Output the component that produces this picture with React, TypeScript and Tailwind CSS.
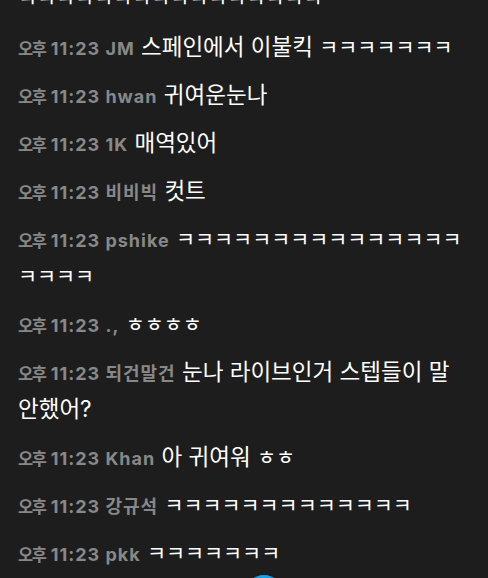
const messages = [
  { name: "yj", text: "ㅋㅋㅋㅋㅋㅋㅋㅋㅋㅋㅋㅋㅋ ㅋㅋㅋㅋㅋㅋㅋㅋㅋㅋㅋㅋㅋㅋㅋㅋㅋㅋㅋㅋ" },
  { name: "JM", text: "스페인에서 이불킥 ㅋㅋㅋㅋㅋㅋㅋ" },
  { name: "hwan", text: "귀여운눈나" },
  { name: "1K", text: "매역있어" },
  { name: "비비빅", text: "컷트" },
  { name: "pshike", text: "ㅋㅋㅋㅋㅋㅋㅋㅋㅋㅋㅋㅋㅋㅋㅋㅋㅋㅋㅋ" },
  { name: ".,", text: "ㅎㅎㅎㅎ" },
  { name: "되건말건", text: "눈나 라이브인거 스텝들이 말 안했어?" },
  { name: "Khan", text: "아 귀여워 ㅎㅎ" },
  { name: "강규석", text: "ㅋㅋㅋㅋㅋㅋㅋㅋㅋㅋㅋㅋㅋ" },
  { name: "pkk", text: "ㅋㅋㅋㅋㅋㅋㅋ" },
]

// jamo runs (ㅋㅋ, ㅎㅎ) render a bit narrower than full syllables
function Message({ text }: { text: string }) {
  const parts = text.split(/([ㄱ-ㅎ]+)/)
  return (
    <span className="text-white">
      {parts.map((p, i) =>
        /^[ㄱ-ㅎ]+$/.test(p) ? (
          <span key={i} className="text-[20.7px] leading-[20px]">{p}</span>
        ) : (
          p
        )
      )}
    </span>
  )
}

export default function App() {
  return (
    <div className="relative h-[578px] w-full overflow-hidden bg-[#1d1d1d] font-['Inter','Noto_Sans_CJK_KR',sans-serif]">
      <div className="mt-[-63px] px-[18px] text-[22.5px] leading-[37px]">
        {messages.map((m, i) => (
          <div key={i} className="h-auto py-[5.5px]">
            <span className="text-[18px] leading-[20px] font-bold tracking-[1px] text-[#888888]">
              <span className="text-[16.5px] tracking-[-1.5px]">오후</span> 11:23 {m.name}
            </span>{" "}
            <Message text={m.text} />
          </div>
        ))}
      </div>

      {/* scroll to bottom button */}
      <div className="absolute left-[245px] top-[575px] h-[38px] w-[38px] rounded-full bg-[#17a2ea]" />
    </div>
  )
}
